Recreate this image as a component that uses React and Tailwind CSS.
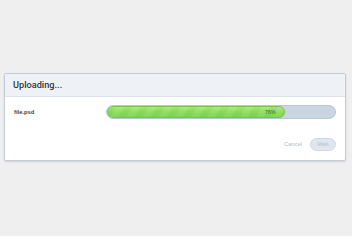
export default function App() {
  const progress = 78;

  return (
    <div className="h-[236px] bg-[#efefef] pt-[73px] pl-[4px] pr-[6px] font-['Liberation_Sans',Arial,sans-serif]">
      <div className="h-[88px] bg-white border border-[#c3cbd4] rounded-[2px] shadow-[0_1px_2px_rgba(0,0,0,0.12)] flex flex-col">
        {/* header */}
        <div className="h-[23px] bg-[#eef2f7] border-b border-[#dde3ea] flex items-center pl-[8px]">
          <h1 className="text-[9.2px] font-['Roboto',sans-serif] font-medium text-[#30363c]">
            Uploading...
          </h1>
        </div>

        {/* file row */}
        <div className="flex items-center pt-[8px] pl-[9px] pr-[9px]">
          <span className="w-[92px] text-[5.8px] font-semibold text-[#3a3f44]">file.psd</span>
          <div className="flex-1 h-[14px] rounded-full bg-[#c9d6e1] border border-[#b8c7d4] overflow-hidden">
            <div
              className="relative h-full rounded-full border border-[#72c843] bg-[repeating-linear-gradient(120deg,#86d955_0px,#86d955_7px,#92de63_7px,#92de63_14px)] flex items-center justify-end pr-[8px]"
              style={{ width: `${progress}%` }}
            >
              <div className="absolute inset-0 rounded-full bg-[linear-gradient(to_bottom,rgba(255,255,255,0.25),rgba(255,255,255,0)_50%,rgba(60,140,20,0.12))]" />
              <span className="relative text-[5.6px] text-[#3d6f1c]">76%</span>
            </div>
          </div>
        </div>

        {/* footer */}
        <div className="mt-auto flex items-center justify-end gap-[8px] pr-[9px] pb-[9px]">
          <button className="text-[5.8px] text-[#b3bcc6]">Cancel</button>
          <button className="w-[26px] h-[13px] rounded-full bg-[#dfe6ee] border border-[#cfd8e2] text-[5.8px] text-[#b4c0cc]">
            Wait
          </button>
        </div>
      </div>
    </div>
  );
}
